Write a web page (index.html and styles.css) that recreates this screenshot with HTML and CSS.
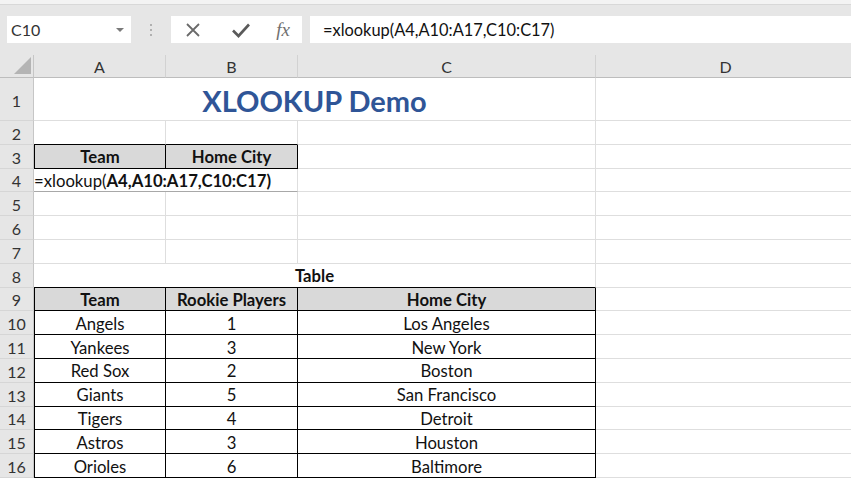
FILE: index.html
```html
<!DOCTYPE html>
<html>
<head>
<meta charset="utf-8">
<link rel="stylesheet" href="styles.css">
</head>
<body>
<div class="fbar">
  <div class="namebox"><span class="nb-text">C10</span><span class="nb-arrow"></span></div>
  <div class="dots"><span></span><span></span><span></span></div>
  <div class="btns">
    <svg class="ico" width="24" height="24" viewBox="0 0 24 24"><path d="M6 6 L18 18 M18 6 L6 18" stroke="#6a6a6a" stroke-width="1.8" fill="none"/></svg>
    <svg class="ico" width="24" height="24" viewBox="0 0 24 24"><path d="M4 12.5 L9.5 18 L20 6.5" stroke="#5a5a5a" stroke-width="2.6" fill="none"/></svg>
    <span class="fx">fx</span>
  </div>
  <div class="fbox">=xlookup(A4,A10:A17,C10:C17)</div>
</div>
<div class="sheet">
  <div class="corner"><span class="tri"></span></div>
  <div class="ch">A</div><div class="ch">B</div><div class="ch">C</div><div class="ch">D</div>

  <div class="rh">1</div><div class="c span3 title">XLOOKUP Demo</div><div class="c"></div>
  <div class="rh">2</div><div class="c bb"></div><div class="c bb"></div><div class="c"></div><div class="c"></div>
  <div class="rh">3</div><div class="c th tl">Team</div><div class="c th">Home City</div><div class="c"></div><div class="c"></div>
  <div class="rh">4</div><div class="c span2 left f4">=xlookup(<b>A4,A10:A17,C10:C17)</b></div><div class="c"></div><div class="c"></div>
  <div class="rh">5</div><div class="c"></div><div class="c"></div><div class="c"></div><div class="c"></div>
  <div class="rh">6</div><div class="c"></div><div class="c"></div><div class="c"></div><div class="c"></div>
  <div class="rh">7</div><div class="c"></div><div class="c"></div><div class="c"></div><div class="c"></div>
  <div class="rh">8</div><div class="c span3 bold bb">Table</div><div class="c"></div>
  <div class="rh">9</div><div class="c th tl">Team</div><div class="c th">Rookie Players</div><div class="c th">Home City</div><div class="c"></div>
  <div class="rh">10</div><div class="c t tl">Angels</div><div class="c t">1</div><div class="c t">Los Angeles</div><div class="c"></div>
  <div class="rh">11</div><div class="c t tl">Yankees</div><div class="c t">3</div><div class="c t">New York</div><div class="c"></div>
  <div class="rh">12</div><div class="c t tl">Red Sox</div><div class="c t">2</div><div class="c t">Boston</div><div class="c"></div>
  <div class="rh">13</div><div class="c t tl">Giants</div><div class="c t">5</div><div class="c t">San Francisco</div><div class="c"></div>
  <div class="rh">14</div><div class="c t tl">Tigers</div><div class="c t">4</div><div class="c t">Detroit</div><div class="c"></div>
  <div class="rh">15</div><div class="c t tl">Astros</div><div class="c t">3</div><div class="c t">Houston</div><div class="c"></div>
  <div class="rh">16</div><div class="c t tl">Orioles</div><div class="c t">6</div><div class="c t">Baltimore</div><div class="c"></div>
</div>
</body>
</html>
```

FILE: styles.css
```css
* { box-sizing: border-box; }
html, body { margin: 0; padding: 0; background: #fff; overflow: hidden; }
body { width: 851px; height: 478px; font-family: Lato, "Open Sans", sans-serif; color: #111; }

.fbar {
  height: 55px;
  background: #e6e6e6;
  border-top: 4px solid #f3f3f3;
  display: flex;
  align-items: flex-start;
  padding-top: 12px;
  box-shadow: inset 0 1px 0 #d8d8d8;
}
.namebox {
  margin-left: 7px;
  width: 124px;
  height: 27px;
  background: #fff;
  display: flex;
  align-items: center;
  justify-content: space-between;
  padding: 0 7px 0 4px;
}
.nb-text { font-size: 16px; color: #333; }
.nb-arrow {
  width: 0; height: 0;
  border-left: 4px solid transparent;
  border-right: 4px solid transparent;
  border-top: 4px solid #7a7a7a;
}
.dots {
  width: 40px;
  height: 27px;
  display: flex;
  flex-direction: column;
  align-items: center;
  justify-content: center;
  gap: 3px;
}
.dots span { width: 2px; height: 2px; background: #b0b0b0; display: block; }
.btns {
  width: 131px;
  height: 27px;
  background: #fff;
  display: flex;
  align-items: center;
  justify-content: space-between;
  padding: 0 10px 0 10px;
}
.ico { display: block; }
.fx {
  font-family: "Liberation Serif", serif;
  font-style: italic;
  font-size: 19px;
  color: #707070;
  padding-right: 2px;
}
.fbox {
  margin-left: 8px;
  flex: 1;
  height: 27px;
  background: #fff;
  display: flex;
  align-items: center;
  padding-left: 13px;
  font-size: 16.4px;
  color: #111;
}

.sheet {
  display: grid;
  grid-template-columns: 34px 132px 132px 298px 260px;
  grid-template-rows: 23px 43px repeat(15, 23.8px);
}
.corner {
  background: #e6e6e6;
  border-right: 1px solid #c6c6c6;
  border-bottom: 1px solid #bdbdbd;
  position: relative;
}
.tri {
  position: absolute;
  right: 2px;
  bottom: 3px;
  width: 0; height: 0;
  border-left: 17px solid transparent;
  border-bottom: 17px solid #b4b4b4;
}
.ch {
  background: #e6e6e6;
  border-right: 1px solid #d2d2d2;
  border-bottom: 1px solid #bdbdbd;
  display: flex;
  align-items: center;
  justify-content: center;
  font-size: 16px;
  color: #333;
}
.rh {
  background: #e6e6e6;
  border-right: 1px solid #c6c6c6;
  border-bottom: 1px solid #d6d6d6;
  display: flex;
  align-items: center;
  justify-content: center;
  font-size: 16px;
  color: #333;
  padding-top: 2px;
}
.c {
  border-right: 1px solid #dedede;
  border-bottom: 1px solid #dedede;
  display: flex;
  align-items: center;
  justify-content: center;
  font-size: 16.7px;
  white-space: nowrap;
  overflow: visible;
  padding-top: 2px;
}
.span3 { grid-column: span 3; }
.span2 { grid-column: span 2; }
.left { justify-content: flex-start; padding-left: 0; }
.bold { font-weight: bold; }
.title {
  font-size: 29px;
  font-weight: bold;
  color: #2f5597;
  padding-top: 2px;
}
.bb { border-bottom-color: #000; }
.th {
  background: #d9d9d9;
  font-weight: bold;
  border-right-color: #000;
  border-bottom-color: #000;
}
.t { border-right-color: #000; border-bottom-color: #000; }
.tl { border-left: 1px solid #000; }
.f4 { border-bottom-color: #a8a8a8; font-size: 16.7px; }
.f4 b { font-weight: bold; }
```
